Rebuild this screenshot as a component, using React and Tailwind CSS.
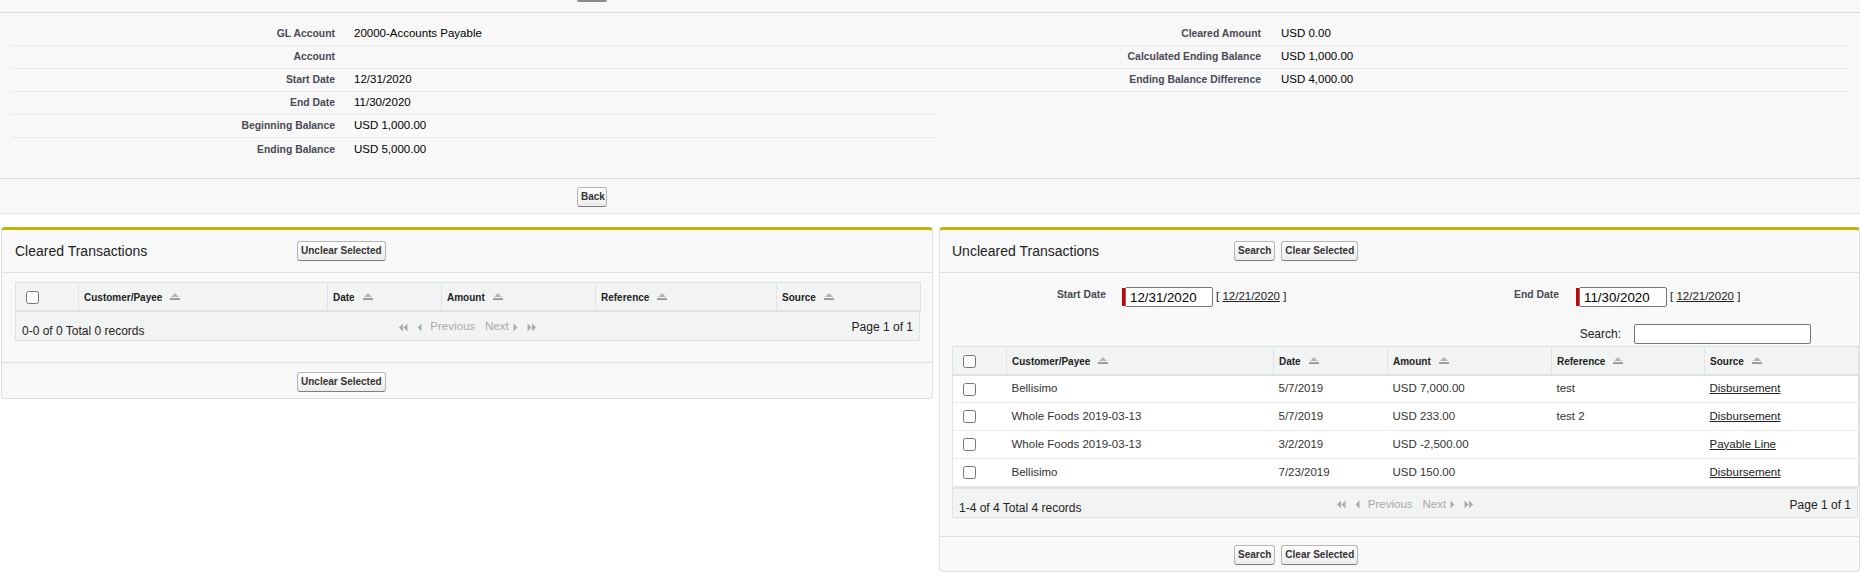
import React from 'react';

const leftRows = [
  ['GL Account', '20000-Accounts Payable'],
  ['Account', ''],
  ['Start Date', '12/31/2020'],
  ['End Date', '11/30/2020'],
  ['Beginning Balance', 'USD 1,000.00'],
  ['Ending Balance', 'USD 5,000.00'],
];

const rightRows = [
  ['Cleared Amount', 'USD 0.00'],
  ['Calculated Ending Balance', 'USD 1,000.00'],
  ['Ending Balance Difference', 'USD 4,000.00'],
];

const uncleared = [
  ['Bellisimo', '5/7/2019', 'USD 7,000.00', 'test', 'Disbursement'],
  ['Whole Foods 2019-03-13', '5/7/2019', 'USD 233.00', 'test 2', 'Disbursement'],
  ['Whole Foods 2019-03-13', '3/2/2019', 'USD -2,500.00', '', 'Payable Line'],
  ['Bellisimo', '7/23/2019', 'USD 150.00', '', 'Disbursement'],
];

const btn =
  'h-[20px] px-[3px] rounded-[3px] border border-[#b5b5b5] border-b-[#7f7f7f] bg-linear-to-b from-white to-[#ececec] text-[10px] font-bold text-[#333] leading-none';

function SortIcon() {
  return (
    <svg width="10" height="7" viewBox="0 0 10 7" className="inline-block ml-[8px] align-[1px]">
      <polygon points="5,0 9,4 1,4" fill="#b5b5b5" />
      <rect x="0" y="5.4" width="10" height="1.3" fill="#6f6f6f" />
    </svg>
  );
}

function Pager() {
  return (
    <div className="flex items-center justify-center text-[#a9a9a9] text-[11.5px]">
      <svg width="9" height="9" viewBox="0 0 9 9">
        <polygon points="4,0.5 0,4.5 4,8.5" fill="#ababab" />
        <polygon points="8.5,0.5 4.5,4.5 8.5,8.5" fill="#ababab" />
      </svg>
      <svg width="5" height="9" viewBox="0 0 5 9" className="ml-[9px]">
        <polygon points="4.5,0.5 0.5,4.5 4.5,8.5" fill="#ababab" />
      </svg>
      <span className="ml-[8px]">Previous</span>
      <span className="ml-[10px]">Next</span>
      <svg width="5" height="9" viewBox="0 0 5 9" className="ml-[4px]">
        <polygon points="0.5,0.5 4.5,4.5 0.5,8.5" fill="#ababab" />
      </svg>
      <svg width="9" height="9" viewBox="0 0 9 9" className="ml-[9px]">
        <polygon points="0.5,0.5 4.5,4.5 0.5,8.5" fill="#ababab" />
        <polygon points="5,0.5 9,4.5 5,8.5" fill="#ababab" />
      </svg>
    </div>
  );
}

function Footer({ text }) {
  return (
    <div className="h-[29px] pt-[3px] border border-t-0 border-[#e0e3e5] bg-[#f2f3f3] grid grid-cols-3 items-center text-[12px] text-[#222]">
      <span className="pl-[6px] pt-[7px]">{text}</span>
      <Pager />
      <span className="text-right pr-[6px]">Page 1 of 1</span>
    </div>
  );
}

function HeadRow({ widths }) {
  const cols = ['Customer/Payee', 'Date', 'Amount', 'Reference', 'Source'];
  return (
    <tr className="bg-[#f2f3f3] border-b-2 border-[#dfe2e4]">
      <th className={`${widths[0]} h-[28px] border-r border-[#e0e3e5] text-left pl-[10px]`}>
        <input type="checkbox" className="m-0 w-[13px] h-[13px] align-middle" />
      </th>
      {cols.map((c, i) => (
        <th
          key={c}
          className={`${widths[i + 1]} h-[28px] pt-[3px] border-r border-[#e0e3e5] last:border-r-0 text-left pl-[5px] text-[10px] font-bold text-[#222]`}
        >
          {c}
          <SortIcon />
        </th>
      ))}
    </tr>
  );
}

function DateField({ label, value, labelW, dataW, dataPl }) {
  return (
    <>
      <div className={`${labelW} text-right text-[10.4px] font-bold text-[#4a4a56]`}>{label}</div>
      <div className={`${dataW} ${dataPl} flex items-center`}>
        <div className="w-[3px] h-[18px] bg-[#c00]" />
        <input
          readOnly
          value={value}
          className="w-[88px] h-[20px] border border-[#767676] rounded-[2px] bg-white px-[4px] text-[13.3px] text-black outline-none"
        />
        <span className="ml-[3px] text-[11.5px] text-[#222]">
          [ <span className="underline">12/21/2020</span> ]
        </span>
      </div>
    </>
  );
}

export default function App() {
  const cw = ['w-[63px]', 'w-[249px]', 'w-[114px]', 'w-[154px]', 'w-[181px]', 'w-[144px]'];
  const uw = ['w-[54px]', 'w-[267px]', 'w-[114px]', 'w-[164px]', 'w-[153px]', 'w-[154px]'];

  return (
    <div className="w-[1860px] h-[575px] overflow-hidden bg-white font-['Liberation_Sans',Arial,sans-serif]">
      {/* Detail block */}
      <div className="bg-[#f8f8f8] border-b border-[#e3e3e3]">
        <div className="h-[13px] border-b border-[#dcdcdc]">
          <div className="ml-[577px] w-[30px] h-[2px] bg-[#8a8a8a] rounded-b-[2px]" />
        </div>
        <div className="flex pl-[11px] pt-[10px]">
          <div className="w-[926px]">
            {leftRows.map(([l, v], i) => (
              <div
                key={l}
                className={`flex items-center h-[23px] ${i < leftRows.length - 1 ? 'border-b border-[#e8e8e8]' : ''}`}
              >
                <div className="w-[324px] text-right text-[10.4px] font-bold text-[#4a4a56]">{l}</div>
                <div className="pl-[19px] text-[11.5px] text-black">{v}</div>
              </div>
            ))}
          </div>
          <div className="w-[912px]">
            {rightRows.map(([l, v]) => (
              <div key={l} className="flex items-center h-[23px] border-b border-[#e8e8e8]">
                <div className="w-[324px] text-right text-[10.4px] font-bold text-[#4a4a56]">{l}</div>
                <div className="pl-[20px] text-[11.5px] text-black">{v}</div>
              </div>
            ))}
          </div>
        </div>
        <div className="h-[17px]" />
        <div className="border-t border-[#dcdcdc] pt-[8px] pb-[6px] flex">
          <button className={`${btn} ml-[577px] w-[30px]`}>Back</button>
        </div>
      </div>

      {/* Panels */}
      <div className="flex items-start gap-[6px] pl-[1px] mt-[13px]">
        {/* Cleared */}
        <div className="w-[932px] border border-[#e0e0e0] border-t-[3px] border-t-[#c4b50d] rounded-[4px] bg-[#f8f8f8]">
          <div className="h-[43px] flex items-center border-b border-[#e0e0e0]">
            <h2 className="w-[295px] pl-[13px] text-[14px] text-[#222]">Cleared Transactions</h2>
            <button className={btn}>Unclear Selected</button>
          </div>
          <div className="pt-[9px] pl-[13px] pr-[12px]">
            <table className="w-[905px] table-fixed border-collapse border border-[#e0e3e5]">
              <thead>
                <HeadRow widths={cw} />
              </thead>
            </table>
            <Footer text="0-0 of 0 Total 0 records" />
          </div>
          <div className="h-[21px]" />
          <div className="border-t border-[#e0e0e0] pt-[9px] pb-[6px] flex">
            <button className={`${btn} ml-[295px]`}>Unclear Selected</button>
          </div>
        </div>

        {/* Uncleared */}
        <div className="w-[921px] border border-[#e0e0e0] border-t-[3px] border-t-[#c4b50d] rounded-[4px] bg-[#f8f8f8]">
          <div className="h-[43px] flex items-center border-b border-[#e0e0e0]">
            <h2 className="w-[294px] pl-[12px] text-[14px] text-[#222]">Uncleared Transactions</h2>
            <div className="flex gap-[6px]">
              <button className={btn}>Search</button>
              <button className={btn}>Clear Selected</button>
            </div>
          </div>
          <div className="pt-[14px] pl-[12px]">
            <div className="flex -ml-[12px]">
              <DateField label="Start Date" value="12/31/2020" labelW="w-[166px]" dataW="w-[287px]" dataPl="pl-[16px]" />
              <DateField label="End Date" value="11/30/2020" labelW="w-[166px]" dataW="w-[280px]" dataPl="pl-[17px]" />
            </div>
            <div className="mt-[17px] flex justify-end items-center pr-[48px] h-[20px]">
              <span className="text-[12px] text-[#222] mr-[13px]">Search:</span>
              <input className="w-[177px] h-[20px] border border-[#767676] rounded-[2px] bg-white outline-none" />
            </div>
            <table className="mt-[2px] w-[906px] table-fixed border-collapse border border-[#e0e3e5]">
              <thead>
                <HeadRow widths={uw} />
              </thead>
              <tbody>
                {uncleared.map((r, i) => (
                  <tr key={i} className="h-[28px] bg-white border-b border-[#e9e9e9] text-[11.5px] text-[#333]">
                    <td className="pl-[10px]">
                      <input type="checkbox" className="m-0 w-[13px] h-[13px] align-middle" />
                    </td>
                    <td className="pl-[5px]">{r[0]}</td>
                    <td className="pl-[5px]">{r[1]}</td>
                    <td className="pl-[5px]">{r[2]}</td>
                    <td className="pl-[5px]">{r[3]}</td>
                    <td className="pl-[5px]">
                      <span className="underline text-[#222]">{r[4]}</span>
                    </td>
                  </tr>
                ))}
              </tbody>
            </table>
            <div className="w-[906px] border-t-2 border-[#dfe2e4]">
              <Footer text="1-4 of 4 Total 4 records" />
            </div>
          </div>
          <div className="h-[18px]" />
          <div className="border-t border-[#e0e0e0] pt-[8px] pb-[6px] flex gap-[6px] pl-[294px]">
            <button className={btn}>Search</button>
            <button className={btn}>Clear Selected</button>
          </div>
        </div>
      </div>
    </div>
  );
}
